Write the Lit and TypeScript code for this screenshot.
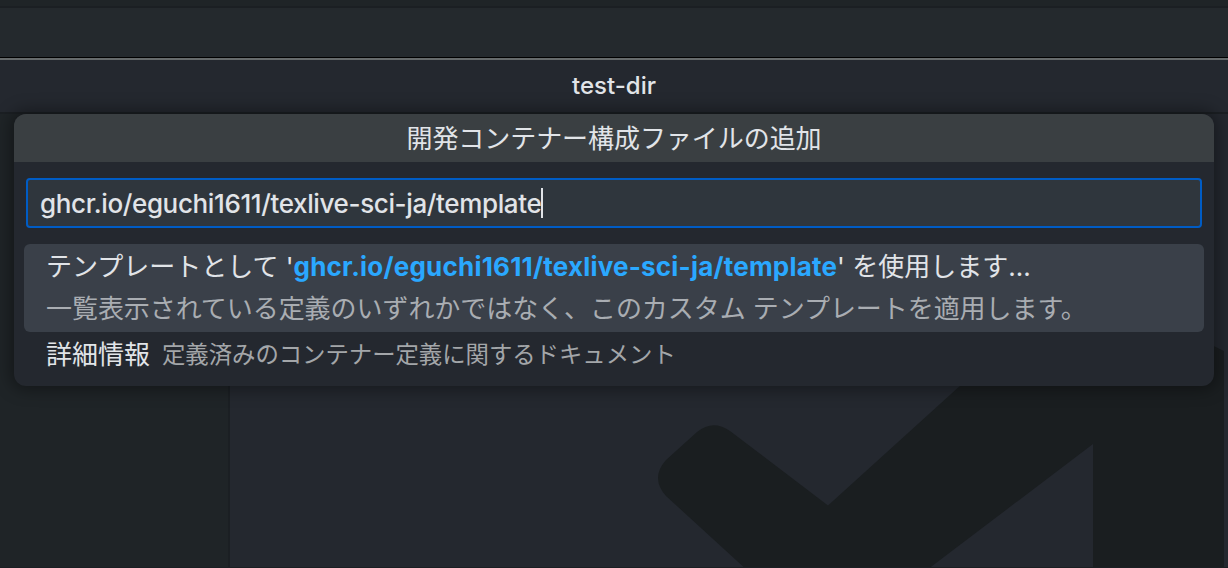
import { customElement, property } from "lit/decorators.js";
import { css, html, LitElement } from "lit";
import { classMap } from "lit/directives/class-map.js";

const TEMPLATE = "ghcr.io/eguchi1611/texlive-sci-ja/template";

@customElement("quick-row")
export class QuickRow extends LitElement {
  static styles = css`
    :host {
      display: block;
    }
    .row {
      padding: 0 22px;
      border-radius: 6px;
      white-space: nowrap;
    }
    .row-active {
      padding-bottom: 4px;
      background: #3a4049;
    }
    .line {
      display: flex;
      align-items: center;
      height: 41px;
    }
    .label {
      color: #e1e4e8;
      white-space: pre;
    }
    .description {
      margin-left: 12px;
      font-size: 23.4px;
      letter-spacing: -0.04px;
      color: #a3a6a9;
    }
    .detail {
      height: 43px;
      letter-spacing: -0.06px;
      color: #a9adb2;
    }
  `;

  @property({ type: Boolean })
  active: boolean = false;

  @property()
  description: string = "";

  @property()
  detail: string = "";

  render() {
    return html`<div class=${classMap({ row: true, "row-active": this.active })}>
      <div class="line">
        <div class="label"><slot></slot></div>
        ${this.description
          ? html`<div class="description">${this.description}</div>`
          : ""}
      </div>
      ${this.detail ? html`<div class="line detail">${this.detail}</div>` : ""}
    </div>`;
  }
}

@customElement("quick-input")
export class QuickInput extends LitElement {
  static styles = css`
    :host {
      display: block;
      box-sizing: border-box;
      overflow: hidden;
      border-radius: 12px;
      background: #24282f;
    }
    .title {
      height: 48px;
      line-height: 50px;
      text-align: center;
      letter-spacing: -0.06px;
      background: #3a3f42;
      color: #e1e4e8;
    }
    .field {
      display: flex;
      align-items: center;
      box-sizing: border-box;
      height: 50px;
      margin: 16px 12px;
      padding: 0 12px;
      border: 2px solid #005cc5;
      border-radius: 4px;
      background: #2f363d;
      color: #e1e4e8;
    }
    .value {
      font-weight: 450;
      letter-spacing: -0.37px;
    }
    .caret {
      width: 2px;
      height: 30px;
      background: #e1e4e8;
    }
    .list {
      padding: 0 10px 10px;
    }
    .match {
      font-weight: 700;
      letter-spacing: 0.2px;
      color: #2aa8ff;
    }
  `;

  render() {
    return html`
      <div class="title">開発コンテナー構成ファイルの追加</div>
      <div class="field">
        <span class="value">${TEMPLATE}</span><span class="caret"></span>
      </div>
      <div class="list">
        <quick-row
          active
          detail="一覧表示されている定義のいずれかではなく、このカスタム テンプレートを適用します。"
          >テンプレートとして '<span class="match">${TEMPLATE}</span>' を使用します...</quick-row
        >
        <quick-row description="定義済みのコンテナー定義に関するドキュメント"
          >詳細情報</quick-row
        >
      </div>
    `;
  }
}

@customElement("app-root")
export class AppRoot extends LitElement {
  static styles = css`
    :host {
      position: relative;
      display: flex;
      flex-direction: column;
      width: 1228px;
      height: 568px;
      overflow: hidden;
      background: #24282f;
      font-family: Inter, "Noto Sans CJK JP", sans-serif;
      font-size: 26px;
    }
    .behind {
      box-sizing: border-box;
      height: 58px;
      border-bottom: 1px solid #000;
      background: #24292d;
    }
    .behind-tabs {
      height: 6px;
      border-bottom: 2px solid #1b1f23;
      background: #1f2427;
    }
    .titlebar {
      box-sizing: border-box;
      height: 56px;
      border-top: 2px solid #666a6b;
      border-bottom: 2px solid #1b1f23;
      line-height: 52px;
      text-align: center;
      font-size: 24px;
      font-weight: 450;
      color: #e1e4e8;
    }
    .body {
      display: flex;
      flex: 1;
      border-bottom: 1px solid #1b1f23;
    }
    .sidebar {
      width: 228px;
      border-right: 2px solid #1b1f23;
      background: #1f2427;
    }
    .editor {
      flex: 1;
    }
    .watermark {
      display: block;
      width: 994px;
      height: 453px;
      fill: #1a1e20;
    }
    .palette {
      position: absolute;
      top: 114px;
      left: 14px;
      width: 1200px;
      height: 272px;
      box-shadow: 0 0 16px 4px rgba(0, 0, 0, 0.36);
    }
  `;

  render() {
    return html`
      <div class="behind"><div class="behind-tabs"></div></div>
      <div class="titlebar">test-dir</div>
      <div class="body">
        <div class="sidebar"></div>
        <div class="editor">
          <svg class="watermark" viewBox="230 114 994 453">
            <path
              d="M1224 351L1110 296Q1075 282 1046 308L828 505.5L730 431Q713 419 697 432L666 460Q650 478 666 496L760 582H911L1093 444V582H1224Z"
            />
          </svg>
        </div>
      </div>
      <quick-input class="palette"></quick-input>
    `;
  }
}
